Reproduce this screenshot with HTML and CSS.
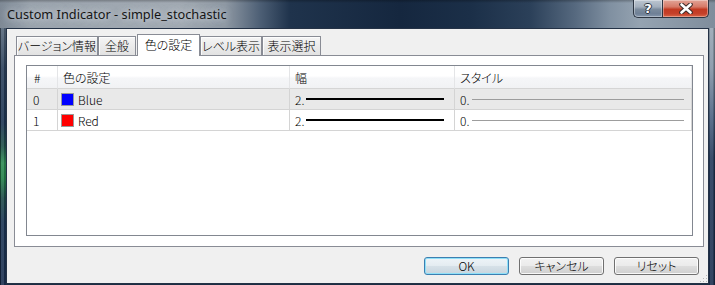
FILE: index.html
```html
<!DOCTYPE html>
<html lang="ja">
<head>
<meta charset="utf-8">
<title>Custom Indicator - simple_stochastic</title>
<link rel="stylesheet" href="styles.css">
</head>
<body>
<div class="window">
  <div class="titlebar">
    <div class="title">Custom Indicator - simple_stochastic</div>
    <div class="caption-btns">
      <div class="cap help">?</div>
      <div class="cap close">
        <svg width="14" height="11" viewBox="0 0 14 11">
          <path d="M2.5 1.5 L11.5 9.5 M11.5 1.5 L2.5 9.5" stroke="#3a2a28" stroke-width="4.6" stroke-linecap="round" fill="none"/>
          <path d="M2.5 1.5 L11.5 9.5 M11.5 1.5 L2.5 9.5" stroke="#ffffff" stroke-width="2.6" stroke-linecap="round" fill="none"/>
        </svg>
      </div>
    </div>
  </div>
  <div class="body">
    <div class="frame-left"></div>
    <div class="client">
      <div class="tabs">
        <div class="tab t1">バージョン情報</div>
        <div class="tab t2">全般</div>
        <div class="tab t3 active">色の設定</div>
        <div class="tab t4">レベル表示</div>
        <div class="tab t5">表示選択</div>
      </div>
      <div class="panel">
        <div class="list">
          <div class="cell h c1">#</div>
          <div class="cell h c2">色の設定</div>
          <div class="cell h c3">幅</div>
          <div class="cell h c4">スタイル</div>

          <div class="cell r sel c1">0</div>
          <div class="cell r sel c2"><span class="swatch blue"></span>Blue</div>
          <div class="cell r sel c3"><span class="num">2.</span><span class="wline"></span></div>
          <div class="cell r sel c4"><span class="num n0">0.</span><span class="sline"></span></div>

          <div class="cell r c1">1</div>
          <div class="cell r c2"><span class="swatch red"></span>Red</div>
          <div class="cell r c3"><span class="num">2.</span><span class="wline"></span></div>
          <div class="cell r c4"><span class="num n0">0.</span><span class="sline"></span></div>
        </div>
      </div>
      <div class="buttons">
        <div class="btn default">OK</div>
        <div class="btn">キャンセル</div>
        <div class="btn">リセット</div>
      </div>
      <div class="grip">
        <svg width="10" height="10" viewBox="0 0 10 10">
          <g fill="#b8b8b8">
            <rect x="8" y="2" width="1" height="1"/>
            <rect x="5" y="5" width="1" height="1"/><rect x="8" y="5" width="1" height="1"/>
            <rect x="2" y="8" width="1" height="1"/><rect x="5" y="8" width="1" height="1"/><rect x="8" y="8" width="1" height="1"/>
          </g>
        </svg>
      </div>
    </div>
    <div class="frame-right"></div>
  </div>
</div>
</body>
</html>
```

FILE: styles.css
```css
* { box-sizing: border-box; }
html, body { margin: 0; padding: 0; }
body {
  width: 715px;
  height: 285px;
  overflow: hidden;
  background: #1c2e44;
  font-family: "Noto Sans CJK JP", "Noto Sans", sans-serif;
  font-size: 12px;
  font-weight: 300;
  color: #000;
}

.window {
  display: flex;
  flex-direction: column;
  width: 715px;
  height: 285px;
}

/* ---------- title bar ---------- */
.titlebar {
  height: 28px;
  flex: none;
  display: flex;
  align-items: flex-start;
  justify-content: space-between;
  background:
    linear-gradient(180deg, rgba(0,0,0,0.25) 0, rgba(0,0,0,0) 3px),
    linear-gradient(90deg, #7e8995 0, #9ba4ae 30px, #a2aab3 180px, #8f99a4 225px, #4d5f75 260px, #1f334c 290px, #15273f 400px, #1b2f48 470px, #2b4059 530px, #56697f 575px, #8090a1 610px, #95a3b1 640px, #7f8d9c 715px);
}
.title {
  font-family: "Noto Sans", sans-serif;
  font-weight: 400;
  font-size: 12.75px;
  line-height: 18px;
  padding: 5px 0 0 7px;
  color: #151515;
  white-space: nowrap;
  text-shadow: 0 0 6px rgba(215,222,230,0.9), 0 0 10px rgba(215,222,230,0.7);
}
.caption-btns {
  display: flex;
  margin-right: 6px;
}
.cap {
  height: 18px;
  border: 1px solid #2c3542;
  border-top: none;
  display: flex;
  align-items: center;
  justify-content: center;
  box-shadow: inset 0 0 0 1px rgba(255,255,255,0.35);
}
.help {
  width: 29px;
  border-right: none;
  border-bottom-left-radius: 5px;
  background: linear-gradient(180deg, #bcc6d1 0, #a3afbd 40%, #7b8b9d 55%, #6f8096 80%, #8596ab 100%);
  color: #fff;
  font-family: "DejaVu Sans", sans-serif;
  font-weight: bold;
  font-size: 13px;
  line-height: 16px;
  text-shadow: 1px 0 0 #2a3440, -1px 0 0 #2a3440, 0 1px 0 #2a3440, 0 -1px 0 #2a3440;
}
.close {
  width: 47px;
  border-bottom-right-radius: 5px;
  background: linear-gradient(180deg, #e2a497 0, #d67a68 40%, #c23a22 55%, #c5402a 80%, #d96547 100%);
}
.close svg { display: block; margin-top: -1px; }

/* ---------- frame ---------- */
.body {
  flex: 1;
  display: flex;
}
.frame-left {
  width: 6px;
  flex: none;
  background:
    linear-gradient(90deg, rgba(0,0,0,0.35) 0 1px, rgba(255,255,255,0.10) 1px 4px, rgba(0,0,0,0.15) 4px 6px),
    linear-gradient(180deg, #56677a 0, #2b405a 40px, #1c3452 95px, #1f4f48 118px, #2c8a52 135px, #238048 150px, #1e4a48 170px, #1b3453 195px, #1c3050 257px);
}
.frame-right {
  width: 6px;
  flex: none;
  background:
    linear-gradient(90deg, rgba(0,0,0,0.15) 0 1px, rgba(255,255,255,0.10) 1px 4px, rgba(0,0,0,0.30) 5px 6px),
    linear-gradient(180deg, #98a6b4 0, #8494a6 40px, #4a6180 90px, #24395a 130px, #1c3050 257px);
}
.client {
  position: relative;
  width: 703px;
  height: 256px;
  flex: none;
  background: #f0f0f0;
  border: 1px solid #243246;
  padding: 5px 4px 0 7px;
}

/* ---------- tabs ---------- */
.tabs {
  height: 21px;
  display: flex;
  align-items: flex-end;
  padding-left: 2px;
  position: relative;
  z-index: 1;
}
.tab {
  height: 19px;
  border: 1px solid #898c95;
  border-bottom: none;
  background: linear-gradient(180deg, #f5f5f5 0, #ebebeb 50%, #e2e2e2 100%);
  box-shadow: inset 1px 1px 0 rgba(255,255,255,0.8);
  font-feature-settings: "palt";
  text-align: center;
  line-height: 18px;
  white-space: nowrap;
}
.t1 { width: 82px; }
.t2 { width: 38px; }
.t3 { width: 63px; margin-left: 1px; }
.t4 { width: 62px; }
.t5 { width: 59px; }
.tab.active {
  height: 22px;
  margin-bottom: -1px;
  background: #fff;
  box-shadow: none;
  line-height: 19px;
}

/* ---------- panel ---------- */
.panel {
  width: 690px;
  height: 192px;
  border: 1px solid #898c95;
  background: #fff;
  padding: 9px 10px 10px 11px;
}
.list {
  height: 171px;
  border: 1px solid #828790;
  display: grid;
  grid-template-columns: 31px 232px 165px 1fr;
  grid-template-rows: 23px 21px 21px;
  align-content: start;
  font-feature-settings: "palt";
}
.cell {
  display: flex;
  align-items: center;
  white-space: nowrap;
  padding-left: 5px;
}
.h {
  background: linear-gradient(180deg, #ffffff 0, #ffffff 45%, #f5f6f8 55%, #f1f2f4 100%);
  border-right: 1px solid #e4e5e7;
  border-bottom: 1px solid #d5d5d5;
  padding-top: 1px;
}
.h.c1 { padding-left: 7px; }
.r {
  border-right: 1px solid #d4d4d4;
  border-bottom: 1px solid #d4d4d4;
}
.r.c1 { padding-left: 6px; }
.r.c2 { padding-left: 3px; }
.sel { background: #e9e9e9; }

.swatch {
  width: 13px;
  height: 13px;
  border: 1px solid #9a9a9a;
  margin-right: 4px;
  flex: none;
}
.swatch.blue { background: #0000ff; }
.swatch.red { background: #ff0000; }

.num { width: 11px; flex: none; }
.num.n0 { width: 12px; }
.wline {
  width: 138px;
  height: 2px;
  background: #000;
}
.sline {
  width: 212px;
  height: 1px;
  background: #9d9d9d;
}

/* ---------- buttons ---------- */
.buttons {
  display: flex;
  justify-content: flex-end;
  gap: 10px;
  margin-top: 10px;
  padding-right: 5px;
}
.btn {
  width: 85px;
  height: 18px;
  border: 1px solid #707070;
  border-radius: 3px;
  background: linear-gradient(180deg, #f2f2f2 0, #ebebeb 48%, #dddddd 52%, #cfcfcf 100%);
  box-shadow: inset 0 0 0 1px rgba(255,255,255,0.85);
  display: flex;
  align-items: center;
  justify-content: center;
  font-feature-settings: "palt";
  line-height: 16px;
}
.btn.default {
  border-color: #3c7fb1;
  background: linear-gradient(180deg, #eef4f8 0, #e4ecf1 48%, #d6e1e8 52%, #c8d5de 100%);
  box-shadow: inset 0 0 0 1px #8fe0f8;
}

.grip {
  position: absolute;
  right: 0;
  bottom: 0;
  width: 10px;
  height: 10px;
}
.grip svg { display: block; }
```
